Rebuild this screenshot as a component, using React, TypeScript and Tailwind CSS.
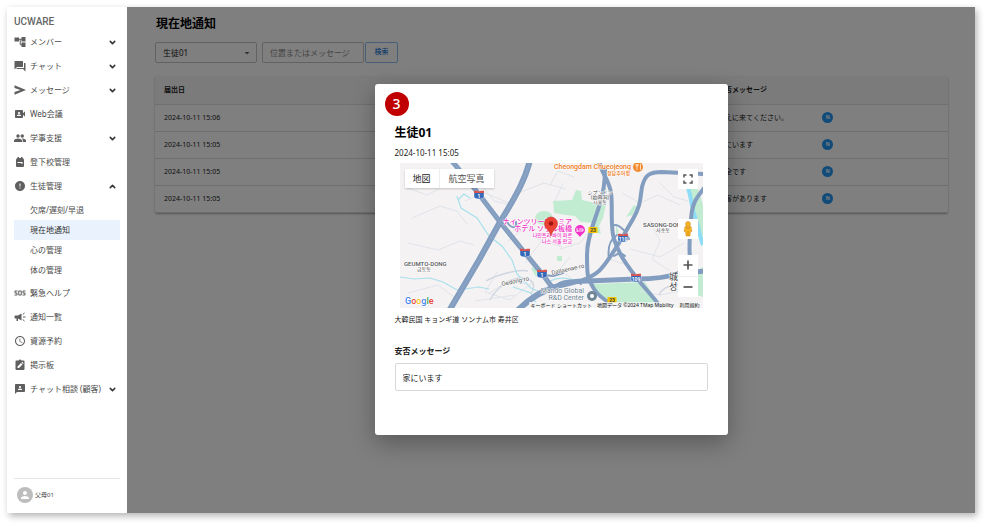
import React from "react";
import {
  Md3P,
  MdArrowDropDown,
  MdError,
  MdPerson,
  MdSchedule,
  MdSos,
  MdVideoCameraFront,
} from "react-icons/md";
import { ChevronDown, ChevronUp } from "lucide-react";

function BoardIcon() {
  return (
    <svg viewBox="0 0 24 24" className="size-3" aria-hidden="true">
      <path
        fill="currentColor"
        d="M19 3h-4.2a3 3 0 0 0-5.6 0H5a2 2 0 0 0-2 2v15a2 2 0 0 0 2 2h14a2 2 0 0 0 2-2V5a2 2 0 0 0-2-2z"
      />
      <path fill="#fff" d="M7 18v-3l7-7 3 3-7 7zM15 7l1.3-1.3 3 3L18 10z" />
    </svg>
  );
}

function BagIcon() {
  return (
    <svg viewBox="0 0 24 24" className="size-3" aria-hidden="true">
      <path
        fill="currentColor"
        d="M7 2h3v2h4V2h3v2.200A4 4 0 0 1 20 8v12a2 2 0 0 1-2 2H6a2 2 0 0 1-2-2V8a4 4 0 0 1 3-3.800z"
      />
      <path fill="#fff" d="M7 12h10v4h-2v-2H7z" />
    </svg>
  );
}

function MegaphoneIcon() {
  return (
    <svg viewBox="0 0 24 24" className="size-3" aria-hidden="true">
      <path fill="currentColor" d="M3 9h5l7-4v14l-7-4v5H5v-5H3a2 2 0 0 1-2-2v-2a2 2 0 0 1 2-2z" />
      <path stroke="currentColor" strokeWidth="2" d="M18 12h5M17.500 7l3.500-3M17.500 17l3.500 3" />
    </svg>
  );
}

function TreeIcon() {
  return (
    <svg viewBox="0 0 24 24" className="size-3" aria-hidden="true">
      <path fill="currentColor" d="M1 3h9v8H1zM15 2h8v9h-8zM15 13h8v9h-8z" />
      <path fill="none" stroke="currentColor" strokeWidth="2" d="M9 6.500h7M12.500 6.500v11H16" />
    </svg>
  );
}

function ForumIcon() {
  return (
    <svg viewBox="0 0 24 24" className="size-3" aria-hidden="true">
      <path fill="currentColor" d="M2 2h15a1 1 0 0 1 1 1v10a1 1 0 0 1-1 1H6l-5 5V3a1 1 0 0 1 1-1z" />
      <path fill="currentColor" d="M20 6h2a1 1 0 0 1 1 1v16l-5-5H6a1 1 0 0 1-1-1v-1h15z" />
    </svg>
  );
}

function SendIcon() {
  return (
    <svg viewBox="0 0 24 24" className="size-3" aria-hidden="true">
      <path fill="currentColor" d="M1 2.500L24 12 1 21.500V16l12-4L1 8z" />
    </svg>
  );
}

function PeopleIcon() {
  return (
    <svg viewBox="0 0 24 24" className="size-3" aria-hidden="true">
      <g fill="currentColor">
        <circle cx="8" cy="8" r="3.500" />
        <circle cx="16.500" cy="8" r="3.500" />
        <path d="M0 20v-3c0-2.500 5-4 8-4s8 1.500 8 4v3zM17.500 20v-3c0-1.500-.7-2.800-2-3.800 3 0 8.500 1.300 8.500 3.800v3z" />
      </g>
    </svg>
  );
}

type Item = { label: string; icon: React.ReactNode; expandable?: boolean; open?: boolean };

const topItems: Item[] = [
  { label: "メンバー", icon: <TreeIcon />, expandable: true },
  { label: "チャット", icon: <ForumIcon />, expandable: true },
  { label: "メッセージ", icon: <SendIcon />, expandable: true },
  { label: "Web会議", icon: <MdVideoCameraFront /> },
  { label: "学事支援", icon: <PeopleIcon />, expandable: true },
  { label: "登下校管理", icon: <BagIcon /> },
  { label: "生徒管理", icon: <MdError />, expandable: true, open: true },
];

const subItems = ["欠席/遅刻/早退", "現在地通知", "心の管理", "体の管理"];

const bottomItems: Item[] = [
  { label: "緊急ヘルプ", icon: <MdSos /> },
  { label: "通知一覧", icon: <MegaphoneIcon /> },
  { label: "資源予約", icon: <MdSchedule /> },
  { label: "掲示板", icon: <BoardIcon /> },
  { label: "チャット相談 (顧客)", icon: <Md3P />, expandable: true },
];

function NavRow({ item }: { item: Item }) {
  return (
    <li>
      <button
        type="button"
        aria-expanded={item.expandable ? !!item.open : undefined}
        className="flex h-6 w-full items-center gap-1 whitespace-nowrap text-left"
      >
        <span className="flex size-3 items-center justify-center text-[12px] text-[#5f5f5f]">{item.icon}</span>
        <span className="flex-1">{item.label}</span>
        {item.expandable &&
          (item.open ? (
            <ChevronUp className="mr-[3px] size-[9px] text-[#333]" strokeWidth={4} />
          ) : (
            <ChevronDown className="mr-[3px] size-[9px] text-[#333]" strokeWidth={4} />
          ))}
      </button>
    </li>
  );
}

function Sidebar() {
  return (
    <aside className="flex w-[120px] shrink-0 flex-col bg-white px-[7px] pt-[7px]">
      <div className="h-4 font-['Roboto',sans-serif] text-[10px] font-medium leading-4 text-[#666]">UCWARE</div>
      <nav className="text-[8px] leading-3 text-[#4a4a4a]">
        <ul>
          {topItems.map((i) => (
            <NavRow key={i.label} item={i} />
          ))}
          <li className="pb-px pt-[2px]">
            <ul>
              {subItems.map((s) => (
                <li key={s}>
                  <a
                    href="#"
                    className={
                      s === "現在地通知"
                        ? "flex h-5 items-center bg-[#eaf2fd] pl-4 text-[#333]"
                        : "flex h-5 items-center pl-4"
                    }
                  >
                    {s}
                  </a>
                </li>
              ))}
            </ul>
          </li>
          {bottomItems.map((i) => (
            <NavRow key={i.label} item={i} />
          ))}
        </ul>
      </nav>
      <div className="mt-auto flex h-[35px] items-center gap-[2px] border-t border-[#e6e6e6] pb-[2px] pl-[3px] text-[6px] text-[#444]">
        <span className="flex size-4 items-center justify-center rounded-full bg-[#bdbdbd] text-[12px] text-white">
          <MdPerson />
        </span>
        父母01
      </div>
    </aside>
  );
}

const rows = [
  { date: "2024-10-11 15:06", message: "迎えに来てください。" },
  { date: "2024-10-11 15:05", message: "家にいます" },
  { date: "2024-10-11 15:05", message: "安全です" },
  { date: "2024-10-11 15:05", message: "障害があります" },
];

function Content() {
  return (
    <div className="pl-7 pr-[27px] pt-2">
      <h1 className="h-[18px] pl-px text-[12px] font-bold leading-[18px] text-black">現在地通知</h1>
      <form className="mt-[9px] flex text-[8px] text-[#222]">
        <div className="relative h-[21px] w-[102px]">
          <select
            aria-label="生徒"
            className="h-full w-full appearance-none rounded-[2px] border border-[#c4c4c4] bg-white pl-[7px]"
          >
            <option>生徒01</option>
          </select>
          <MdArrowDropDown className="pointer-events-none absolute right-1 top-[5px] size-3 text-[#666]" />
        </div>
        <input
          type="text"
          aria-label="位置またはメッセージ"
          placeholder="位置またはメッセージ"
          className="ml-[5px] h-[21px] w-[102px] rounded-[2px] border border-[#c4c4c4] bg-white px-[7px] placeholder:text-[#888]"
        />
        <button
          type="button"
          className="ml-px h-[21px] w-[33px] rounded-[2px] border border-[#8cbcf0] text-[7px] font-medium text-[#1976d2]"
        >
          検索
        </button>
      </form>
      <table className="mt-[13px] w-full table-fixed border-collapse rounded-[2px] text-left text-[7px] text-[#222] shadow-[0_1px_2px_rgba(0,0,0,0.35)]">
        <colgroup>
          <col className="w-[35%]" />
          <col className="w-[35%]" />
          <col className="w-[13%]" />
          <col className="w-[17%]" />
        </colgroup>
        <thead>
          <tr className="h-7 border-b border-[#e0e0e0] bg-[#f6f6f6]">
            <th className="px-[9px] pt-px font-bold">届出日</th>
            <th className="px-[9px] pt-px font-bold">位置</th>
            <th className="px-2 pt-px font-bold">安否メッセージ</th>
            <th aria-label="状態" />
          </tr>
        </thead>
        <tbody>
          {rows.map((r, i) => (
            <tr key={i} className="h-[27px] border-b border-[#dcdcdc]">
              <td className="px-[9px] pt-[2px]">{r.date}</td>
              <td />
              <td className="whitespace-nowrap px-2 pt-[2px]">{r.message}</td>
              <td className="px-[9px]">
                <span className="flex size-[11px] items-center justify-center rounded-full bg-[#2196f3] text-[5px] font-bold text-white">
                  N
                </span>
              </td>
            </tr>
          ))}
        </tbody>
      </table>
    </div>
  );
}

function Shield({ x, y, label }: { x: number; y: number; label: string }) {
  return (
    <g transform={`translate(${x} ${y})`}>
      <path d="M-5 -3.5h10v5c0 1.5-2 2.5-5 2.5s-5-1-5-2.5z" fill="#3568b8" stroke="#fff" strokeWidth="0.4" />
      <path d="M-5 -4.2h3l2 .8 2-.8h3v2.2h-10z" fill="#d9534f" />
      <text y="3" textAnchor="middle" fontSize="5" fontWeight="700" fill="#fff">
        {label}
      </text>
    </g>
  );
}

function RoadTag({ x, y }: { x: number; y: number }) {
  return (
    <g transform={`translate(${x} ${y})`}>
      <rect x="-4.5" y="-3" width="9" height="6" rx="0.5" fill="#f5c400" />
      <text y="2" textAnchor="middle" fontSize="5" fontWeight="700" fill="#444">
        23
      </text>
    </g>
  );
}

function MapDrawing() {
  return (
    <svg
      viewBox="0 0 303 145"
      preserveAspectRatio="xMidYMid slice"
      className="block h-full w-full font-['Roboto','Noto_Sans_CJK_JP',sans-serif]"
      role="img"
      aria-label="地図"
    >
      <rect width="303" height="145" fill="#f4f2f3" />
      <g fill="#c2ecd2">
        <path d="M153 38l19-1 4-10 5 1 1 9 13 3 11 1-3 14-4 8 2 8-8-2-1-9-11-1-6-6-9-1-12-2z" />
        <ellipse cx="144" cy="55" rx="9" ry="7" />
        <path d="M193 121l52-2 15 24-46-3-17-10z" />
        <path d="M234 42l3 2-5 8-6 2z" />
        <path d="M157 93h5v5h-5zM288 26h10l5 16v40l-10-26zM297 108l6-4v30l-6-2zM131 105l5-1 4 6-4 4zM203 20l4 8-4 3zM216 62l3 7-3 3z" />
      </g>
      <g fill="none" stroke="#e0e4ea" strokeWidth="1">
        <path d="M5 24l22 8 12-6M12 55l28-12 17 5 10 13M8 80l30 7 22-9 14 4M65 38l20-8 24 10M80 20l14 18 16 4M108 78l20-16 10 14 24 8M163 20l-8 18M160 86l20-6 8-10M118 30l26-10 22 6M97 109l-12 20 25 8 22-17M88 131l20-13 18 3M75 138l40-6M230 86l30 8 24-14M222 30l18 10 18-8 22 10M250 58l10 20-8 18 18 12M260 20l14 14 14 4M8 130l30-8 20 15M206 95l24 8M240 128l20 4 30-6M150 22l8-14 16 6M170 94l-10 12 14 12M125 100l18-24M40 8l16 16M62 8l12 12 16-2" />
      </g>
      <g fill="none" stroke="#cfd6e0" strokeWidth="1.4">
        <path d="M90 137c6-12 20-22 31-22s16 6 10 16M86 118c10-6 32-12 42-10M285 118c-12 8-20 2-26 14" />
      </g>
      <g fill="none" stroke="#a9e0ec" strokeWidth="1.2">
        <path d="M57 33l4 12 16 10 12 18 13 10 10 14 5 14 14 14 9 4" />
        <path d="M0 114l14 2 16-1 13 4 14 8 22-3 10 2M113 124l18 6 6 12M150 118c8-4 18-4 30 2M70 35l-6-4-6 6" />
      </g>
      <path d="M286 20c6 12 4 20 9 34s4 18 8 28" fill="none" stroke="#8edcf5" strokeWidth="4" />
      <g fill="none" stroke="#829dbf" strokeLinecap="round" strokeLinejoin="round">
        <path strokeWidth="5" d="M51-3L62 10 78 30 100 59 125 90 143 112 152 124" />
        <path strokeWidth="6" d="M130-3C126 14 118 30 100 59L79 97 49 148" />
        <path strokeWidth="6" d="M117 148c8-8 20-19 39-24" />
        <path strokeWidth="5" d="M154 124c12-5 20-6 34-6l48-2c24 0 36-3 44-6l25-2" />
        <path strokeWidth="4" d="M154 124c20-3 36-8 45-16 12-12 26-38 34-52s7-20 9-32c3-12 7-15 20-15l43 2" />
        <path strokeWidth="4" d="M199-2c2 12 10 18 12 32s-1 34 3 46 8 20 22 38 20 22 27 34" />
        <path strokeWidth="4" d="M205 6c0 10-1 22-5 34-4 16-13 32-13 52s0 22 7 34c4 6 9 10 17 15" />
        <path strokeWidth="4" d="M305 24c-8 10-13 16-14 32s-4 40 3 56" />
        <path strokeWidth="2" d="M212 63c6-3 9 2 13 5l4 8M209 96c-2-14 2-20 8-24M214 93c4-3 8-3 11 0M107 59c5 8 10 6 9 0M157 122c4-5 18-6 24-1M143 112l10 1 10-3" />
      </g>
      <g fill="none" stroke="#9fb5d0" strokeWidth="0.5">
        <path d="M51-3L62 10 78 30 100 59 125 90 143 112 152 124" />
        <path d="M130-3C126 14 118 30 100 59L79 97 49 148" />
      </g>
      <Shield x={79} y={32} label="1" />
      <Shield x={125} y={90} label="1" />
      <Shield x={142} y={111} label="1" />
      <Shield x={223} y={75} label="110" />
      <Shield x={236} y={115} label="109" />
      <RoadTag x={193} y={67} />
      <RoadTag x={212} y={137} />
      <g stroke="#fff" strokeWidth="1" paintOrder="stroke" strokeLinejoin="round">
        <g fill="#ee7a22" fontWeight="500" textAnchor="end">
          <text x="231" y="6" fontSize="7">Cheongdam Chueojeong</text>
          <text x="230" y="12" fontSize="5">청담추어정</text>
        </g>
        <g fill="#444" textAnchor="middle" fontSize="5">
          <text x="200" y="31">シプンドン</text>
          <text x="200" y="36">(始興洞)</text>
          <text x="200" y="41">시흥동</text>
          <text x="263" y="69">사송동</text>
          <text x="24" y="108">금토동</text>
        </g>
        <g fill="#555" fontSize="6" fontWeight="500">
          <text x="243" y="64">SASONG-DONG</text>
          <text x="4" y="103">GEUMTO-DONG</text>
          <text x="102" y="123" transform="rotate(-12 102 123)" fontWeight="400">Oedong-ro</text>
          <text x="152" y="112" transform="rotate(-13 152 112)" fontWeight="400">Dallaenae-ro</text>
        </g>
        <g fill="#333" fontSize="9">
          <text x="269" y="117">城</text>
          <text x="269" y="127">성</text>
        </g>
        <g fill="#f030c4" fontWeight="500" textAnchor="end">
          <text x="172" y="61" fontSize="7">ナインツリープレミア</text>
          <text x="172" y="68" fontSize="7">ホテル ソウル板橋</text>
          <text x="172" y="74" fontSize="5">나인트리 바이 파르</text>
          <text x="172" y="80" fontSize="5">나스 서울 판교</text>
        </g>
        <g fill="#6b7f90" fontSize="7" textAnchor="end">
          <text x="184" y="130">Mando Global</text>
          <text x="184" y="137">R&amp;D Center</text>
        </g>
      </g>
      <circle cx="238" cy="4" r="5" fill="#f58a2c" />
      <path d="M236 1v2.500M237 1v6M238 1v2.500M240.500 1v6" stroke="#fff" strokeWidth="0.7" />
      <path d="M175 67a5 5 0 1 1 10 0c0 3-3 4-5 7-2-3-5-4-5-7z" fill="#f032c8" />
      <path d="M177 65v4M177 68h6v-2h-4" stroke="#fff" strokeWidth="0.9" fill="none" />
      <circle cx="192" cy="133" r="5" fill="#6f8796" />
      <circle cx="192" cy="133" r="2" fill="#fff" />
      <path d="M151 73c-1-6-6.500-7-6.500-12.500a6.500 6.500 0 0 1 13 0C157.500 66 152 67 151 73z" fill="#ea4335" stroke="#c5221f" strokeWidth="0.5" />
      <circle cx="151" cy="60.500" r="2.300" fill="#a11510" />
      <text x="5" y="141" fontSize="9" fontWeight="500" stroke="#fff" strokeWidth="1" paintOrder="stroke">
        <tspan fill="#4285f4">G</tspan>
        <tspan fill="#ea4335">o</tspan>
        <tspan fill="#fbbc05">o</tspan>
        <tspan fill="#4285f4">g</tspan>
        <tspan fill="#34a853">l</tspan>
        <tspan fill="#ea4335">e</tspan>
      </text>
    </svg>
  );
}

function LocationMap() {
  return (
    <div className="relative mx-[5px] mt-1 h-[145px] overflow-hidden">
      <MapDrawing />
      <div className="absolute left-[5px] top-[6px] flex h-[19px] bg-white text-[9px] text-[#555] shadow-[0_1px_2px_rgba(0,0,0,0.2)]">
        <button type="button" className="w-[35px] border-r border-[#eee] pt-px text-[#222]">地図</button>
        <button type="button" className="w-[54px] pt-px">航空写真</button>
      </div>
      <button
        type="button"
        aria-label="全画面"
        className="absolute right-[5px] top-[6px] flex size-5 items-center justify-center bg-white"
      >
        <svg viewBox="0 0 10 10" className="size-[10px]" fill="none" stroke="#555" strokeWidth="1.5">
          <path d="M1 3.500V1h2.500M6.500 1H9v2.500M9 6.500V9H6.500M3.500 9H1V6.500" />
        </svg>
      </button>
      <button
        type="button"
        aria-label="ストリートビュー"
        className="absolute right-[5px] top-14 flex size-5 items-center justify-center bg-white"
      >
        <svg viewBox="0 0 10 16" className="h-4 w-[10px]">
          <path d="M2 5.500h6l1 5H7.500L7 15H3l-.5-4.500H1z" fill="#f5b325" stroke="#d08c16" strokeWidth="0.5" />
          <circle cx="5" cy="3" r="2.500" fill="#f5b325" stroke="#d08c16" strokeWidth="0.5" />
          <path d="M5 10v5M3 6l2 2 2-2" stroke="#c07c10" strokeWidth="0.6" fill="none" />
        </svg>
      </button>
      <div className="absolute right-[5px] top-[92px] flex h-[42px] w-5 flex-col bg-white">
        <button type="button" aria-label="拡大" className="flex flex-1 items-center justify-center border-b border-[#eee]">
          <svg viewBox="0 0 10 10" className="size-[10px]" stroke="#555" strokeWidth="1.7">
            <path d="M.5 5h9M5 .5v9" />
          </svg>
        </button>
        <button type="button" aria-label="縮小" className="flex flex-1 items-center justify-center">
          <svg viewBox="0 0 10 10" className="size-[10px]" stroke="#555" strokeWidth="1.7">
            <path d="M.5 5h9" />
          </svg>
        </button>
      </div>
      <div className="absolute bottom-0 right-0 flex h-[6px] gap-px whitespace-nowrap text-[5px] leading-[6px] text-[#111]">
        <span className="bg-[#f5f5f5]/75 px-[2px]">キーボード ショートカット</span>
        <span className="bg-[#f5f5f5]/75 px-[2px]">地図データ ©2024 TMap Mobility</span>
        <span className="bg-[#f5f5f5]/75 px-[3px]">利用規約</span>
      </div>
    </div>
  );
}

function LocationDialog() {
  return (
    <section
      role="dialog"
      aria-labelledby="dialog-title"
      className="relative w-[353px] rounded-[3px] bg-white px-5 pb-11 pt-[41px] text-[#222] shadow-[0_8px_24px_rgba(0,0,0,0.3)]"
    >
      <span className="absolute left-[10px] top-2 flex size-6 items-center justify-center rounded-full bg-[#c00000] text-[14px] font-medium leading-none text-white">
        3
      </span>
      <h2 id="dialog-title" className="h-4 text-[12px] font-bold leading-4 text-black">生徒01</h2>
      <p className="mt-[6px] h-3 text-[8px] leading-3">2024-10-11 15:05</p>
      <LocationMap />
      <p className="mt-[6px] h-3 text-[7px] leading-3">大韓民国 キョンギ道 ソンナム市 寿井区</p>
      <label htmlFor="safety-message" className="mt-[19px] block h-3 text-[8px] font-bold leading-3">
        安否メッセージ
      </label>
      <input
        id="safety-message"
        type="text"
        readOnly
        value="家にいます"
        className="mt-[6px] block h-7 w-full rounded-[2px] border border-[#d8d8d8] px-[7px] text-[8px]"
      />
    </section>
  );
}

export default function App() {
  return (
    <div className="flex min-h-screen bg-white pb-[14px] pl-[7px] pr-[14px] pt-[7px] font-['Noto_Sans','Noto_Sans_CJK_JP','Noto_Sans_CJK_KR',sans-serif]">
      <div className="flex flex-1 shadow-[2px_3px_7px_rgba(0,0,0,0.3)]">
        <Sidebar />
        <main className="relative flex-1 bg-white">
          <Content />
          <div className="absolute inset-0 flex items-center justify-center bg-black/50 pb-px">
            <LocationDialog />
          </div>
        </main>
      </div>
    </div>
  );
}
